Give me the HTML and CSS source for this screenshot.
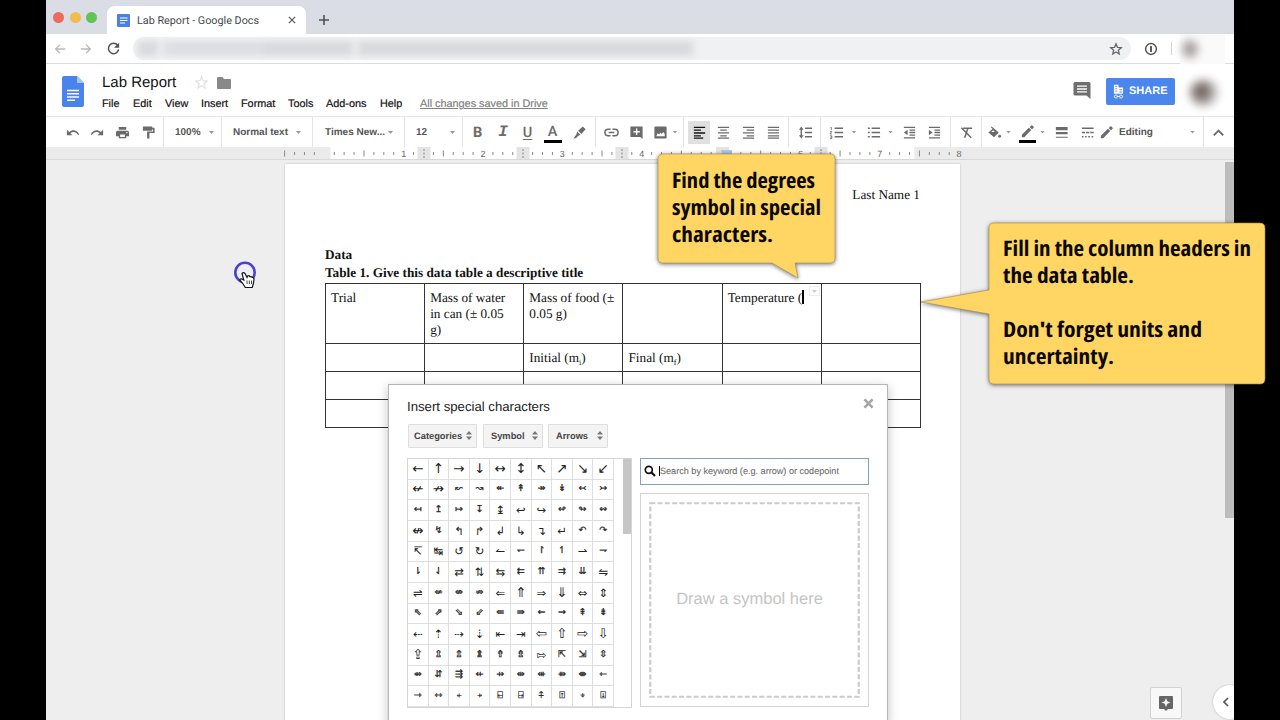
FILE: index.html
```html
<!DOCTYPE html>
<html lang="en">
<head>
<meta charset="utf-8">
<title>Lab Report - Google Docs</title>
<link rel="stylesheet" href="styles.css">
</head>
<body>
<svg class="defs" aria-hidden="true">
  <symbol id="undo" viewBox="0 0 16 16"><path d="M2 5v6h6L5.700 8.700C8.500 6.500 12 7.200 14 10.700l1.200-.6C12.900 5.400 8 4.400 4.500 7.500z"/></symbol>
  <symbol id="print" viewBox="0 0 16 16"><path d="M4 2h8v3H4zM3 6h10a2 2 0 0 1 2 2v4h-3v2H4v-2H1V8a2 2 0 0 1 2-2zm2.500 4v2.700h5V10zM12 7.500v1.200h1.300V7.500z" fill-rule="evenodd"/></symbol>
  <symbol id="paint" viewBox="0 0 16 16"><path d="M2 1.500h10v1.500h2.500V8.500H9v6H6.500V6.900h6.400V4.600H12V6H2z"/></symbol>
  <symbol id="hl" viewBox="0 0 16 16"><path d="M11.500 1.500l3 3L10 9.500 6.500 6zM5.500 7l3.500 3.500-2.500 1.300L4 14H1.500l3-3.500z"/></symbol>
  <symbol id="link" viewBox="0 0 16 16"><path d="M7 4.500H4.500a3.500 3.500 0 0 0 0 7H7M9 4.500h2.500a3.500 3.500 0 0 1 0 7H9M5 8h6" fill="none" stroke="currentColor" stroke-width="1.600"/></symbol>
  <symbol id="addc" viewBox="0 0 16 16"><path d="M1.500 1.500h13V15L12 12.700H1.500zM7.400 3.700v2.700H4.700v1.500h2.700v2.700h1.500V7.900h2.700V6.400H8.900V3.700z" fill-rule="evenodd"/></symbol>
  <symbol id="img" viewBox="0 0 16 16"><path d="M2.500 1.500h11q1 0 1 1v11q0 1-1 1h-11q-1 0-1-1v-11q0-1 1-1zM3.500 12h9V9.500L11 7.500 9.500 9.500 8 8 6.500 10 5 8.500z" fill-rule="evenodd"/></symbol>
  <symbol id="al" viewBox="0 0 16 16"><path d="M2 2.500h12M2 5.500h7.500M2 8.500h12M2 11.500h7.500M2 14h10" stroke="currentColor" stroke-width="1.400"/></symbol>
  <symbol id="ac" viewBox="0 0 16 16"><path d="M2 2.500h12M4.500 5.500h7M2 8.500h12M4.500 11.500h7M2 14h12" stroke="currentColor" stroke-width="1.300"/></symbol>
  <symbol id="ar" viewBox="0 0 16 16"><path d="M2 2.500h12M6 5.500h8M2 8.500h12M6 11.500h8M2 14h12" stroke="currentColor" stroke-width="1.300"/></symbol>
  <symbol id="aj" viewBox="0 0 16 16"><path d="M2 2.500h12M2 5.500h12M2 8.500h12M2 11.500h12M2 14h12" stroke="currentColor" stroke-width="1.300"/></symbol>
  <symbol id="ls" viewBox="0 0 16 16"><path d="M7.500 3.500H15M7.500 8H15M7.500 12.500H15M3.500 4v8" stroke="currentColor" stroke-width="1.500"/><path d="M3.500 1.500L6 5H1zM3.500 14.500L6 11H1z"/></symbol>
  <symbol id="nl" viewBox="0 0 16 16"><path d="M6 3.500h9M6 8h9M6 12.500h9" stroke="currentColor" stroke-width="1.500"/><path d="M1.500 2.500h1v3M1 7h2L1 9.500h2M1 11.500h2v3H1M1.500 13H3" stroke="currentColor" stroke-width=".9" fill="none"/></symbol>
  <symbol id="bl" viewBox="0 0 16 16"><path d="M6 3.500h9M6 8h9M6 12.500h9M2 3.500h2M2 8h2M2 12.500h2" stroke="currentColor" stroke-width="1.700"/></symbol>
  <symbol id="od" viewBox="0 0 16 16"><path d="M2 2.500h12M8 5.500h6M8 8h6M8 10.700h6M2 13.700h12" stroke="currentColor" stroke-width="1.400"/><path d="M2 8l4-3v6z"/></symbol>
  <symbol id="id" viewBox="0 0 16 16"><path d="M2 2.500h12M8 5.500h6M8 8h6M8 10.700h6M2 13.700h12" stroke="currentColor" stroke-width="1.400"/><path d="M6 8L2 5v6z"/></symbol>
  <symbol id="cf" viewBox="0 0 16 16"><path d="M4.500 3.500H14M9.500 3.500L6 13.500M2.500 3L13 13.500" stroke="currentColor" stroke-width="1.600" fill="none"/></symbol>
  <symbol id="fill" viewBox="0 0 16 16"><path d="M5 1.500l7.500 6.500L7.500 13 1.500 8 6 4 4 2.500zM6.500 5.500L4.500 7.500h4z" fill-rule="evenodd"/><circle cx="13.500" cy="12" r="1.500"/></symbol>
  <symbol id="pencil" viewBox="0 0 16 16"><path d="M2 11.500V14h2.500L12 6.500 9.500 4zM10.300 3.200L12 1.500q.6-.5 1.200 0L14.500 3q.5.500 0 1.100L12.800 5.700z"/></symbol>
  <symbol id="lw" viewBox="0 0 16 16"><path d="M2 2h12.500v3.500H2zM2 7.500h12.500v2.300H2zM2 12.500h12.500v1.200H2z"/></symbol>
  <symbol id="ld" viewBox="0 0 16 16"><path d="M2 3.500h12.500M2 8h3.400M6.500 8h3.500M11 8h3.500M2 12.500h1.700M5.400 12.500h1.700M8.800 12.500h1.700M12.400 12.500h1.700" stroke="currentColor" stroke-width="1.700"/></symbol>
  <symbol id="up" viewBox="0 0 16 16"><path d="M3 11l5-5 5 5" stroke="currentColor" stroke-width="2" fill="none"/></symbol>
  <symbol id="star" viewBox="0 0 16 16"><path d="M8 2l1.700 4.100 4.400.4-3.400 2.900 1 4.300L8 11.400l-3.700 2.300 1-4.300-3.400-2.900 4.400-.4z" fill="none" stroke="currentColor" stroke-width="1.400"/></symbol>
  <symbol id="back" viewBox="0 0 16 16"><path d="M14 8H3M8 3L3 8l5 5" fill="none" stroke="currentColor" stroke-width="1.500"/></symbol>
  <symbol id="x" viewBox="0 0 16 16"><path d="M3 3l10 10M13 3L3 13" fill="none" stroke="currentColor"/></symbol>
</svg>

<main class="screen">
  <div class="tabs">
    <div class="lights"><i class="red"></i><i class="yellow"></i><i class="green"></i></div>
    <div class="tab">
      <svg class="tabicon" viewBox="0 0 13 13"><rect width="13" height="13" rx="1" fill="#4a80ea"/><path d="M3 4h7.500M3 6.500h7.500M3 9h5" stroke="#fff" stroke-width="1.200"/></svg>
      <span class="tabname">Lab Report - Google Docs</span>
      <svg class="tabclose"><use href="#x"/></svg>
    </div>
    <svg class="plus" viewBox="0 0 12 12"><path d="M6 1v10M1 6h10" stroke="#4d5055" stroke-width="1.600"/></svg>
  </div>

  <div class="address">
    <svg class="ic nav"><use href="#back"/></svg>
    <svg class="ic nav fwd"><use href="#back"/></svg>
    <svg class="ic reload" viewBox="0 0 16 16"><path d="M12.500 4.700A5.500 5.500 0 1 0 13.500 9" fill="none" stroke="#505357" stroke-width="1.600"/><path d="M14 1.800v5.400H8.600z" fill="#505357"/></svg>
    <div class="omni"><div class="smear"><i></i><i></i><i></i><i></i></div><svg class="ic"><use href="#star"/></svg></div>
    <svg class="ic onep" viewBox="0 0 16 16"><circle cx="8" cy="8" r="6.200" fill="none" stroke="#555" stroke-width="1.700"/><path d="M8 4.500v7" stroke="#555" stroke-width="2.200"/></svg>
    <div class="vline"></div>
    <div class="haze"><i></i></div>
  </div>

  <header class="header">
    <svg class="doclogo" viewBox="0 0 22 31"><path d="M2 0h13l7 7v22q0 2-2 2H2q-2 0-2-2V2q0-2 2-2z" fill="#4a83ec"/><path d="M15 0l7 7h-7z" fill="#a5c3f7"/><path d="M5 14.500h12M5 17.700h12M5 21h12M5 24.200h8" stroke="#fff" stroke-width="1.400"/></svg>
    <div class="titles">
      <div class="titlerow"><span class="title">Lab Report</span><svg class="ic pale"><use href="#star"/></svg><svg class="folder" viewBox="0 0 14 12"><path d="M1 0h4.500L7 2h6q1 0 1 1v8q0 1-1 1H1q-1 0-1-1V1q0-1 1-1z" fill="#888"/></svg></div>
      <nav class="menu"><span>File</span><span>Edit</span><span>View</span><span>Insert</span><span>Format</span><span>Tools</span><span>Add-ons</span><span>Help</span><a>All changes saved in Drive</a></nav>
    </div>
    <svg class="comments" viewBox="0 0 18 17"><path d="M2 0h14q1.500 0 1.500 1.500V17l-4-3.500H2Q.5 13.500.5 12V1.500Q.5 0 2 0z" fill="#6e6e6e"/><path d="M4 4.200h10M4 7h10M4 9.800h10" stroke="#fff" stroke-width="1.300"/></svg>
    <div class="share"><svg viewBox="0 0 12 15"><path d="M1 0h5v3h5v7H1z" fill="#fff"/><path d="M2.500 2h2M2.500 4.500h2M2.500 7h2M7 5.500h3M7 8h3" stroke="#4a83ec"/><path d="M5 11.500H3a1.500 1.500 0 0 0 0 3h2M7 11.500h2a1.500 1.500 0 0 1 0 3H7M4 13h4" fill="none" stroke="#fff"/></svg>SHARE</div>
    <div class="avatar"></div>
  </header>

  <div class="toolbar">
    <div class="grp g1"><svg class="ic"><use href="#undo"/></svg><svg class="ic flip"><use href="#undo"/></svg><svg class="ic"><use href="#print"/></svg><svg class="ic"><use href="#paint"/></svg></div>
    <div class="grp g2 drop"><b>100%</b><i></i></div>
    <div class="grp g3 drop"><b>Normal text</b><i></i></div>
    <div class="grp g4 drop"><b>Times New...</b><i></i></div>
    <div class="grp g5 drop"><b>12</b><i></i></div>
    <div class="grp g6"><b class="ltr">B</b><b class="ltr it">I</b><b class="ltr un">U</b><b class="ltr ink">A</b><svg class="ic"><use href="#hl"/></svg></div>
    <div class="grp g7"><svg class="ic"><use href="#link"/></svg><svg class="ic"><use href="#addc"/></svg><svg class="ic"><use href="#img"/></svg><i></i></div>
    <div class="grp g8"><span class="on"><svg class="ic"><use href="#al"/></svg></span><svg class="ic"><use href="#ac"/></svg><svg class="ic"><use href="#ar"/></svg><svg class="ic"><use href="#aj"/></svg></div>
    <div class="grp g9"><svg class="ic"><use href="#ls"/></svg></div>
    <div class="grp g10"><svg class="ic"><use href="#nl"/></svg><i></i><svg class="ic"><use href="#bl"/></svg><i></i><svg class="ic"><use href="#od"/></svg><svg class="ic"><use href="#id"/></svg></div>
    <div class="grp g11"><svg class="ic"><use href="#cf"/></svg></div>
    <div class="grp g12"><svg class="ic"><use href="#fill"/></svg><i></i><span class="pen"><svg class="ic"><use href="#pencil"/></svg></span><i></i><svg class="ic wt"><use href="#lw"/></svg><svg class="ic ds"><use href="#ld"/></svg><svg class="ic"><use href="#pencil"/></svg><b class="edit">Editing</b><i class="last"></i></div>
    <div class="g13"><svg class="ic"><use href="#up"/></svg></div>
  </div>

  <svg class="ruler" id="ruler" viewBox="46 147 1188 12"></svg>

  <section class="canvas">
    <article class="paper">
      <p class="lastname">Last Name 1</p>
      <p class="bold">Data</p>
      <p class="bold">Table 1. Give this data table a descriptive title</p>
      <div class="table">
        <div>Trial</div><div>Mass of water in can (± 0.05 g)</div><div>Mass of food (± 0.05 g)</div><div></div><div class="temp">Temperature (<span class="caret"></span></div><div></div>
        <div></div><div></div><div>Initial (m<sub>i</sub>)</div><div>Final (m<sub>f</sub>)</div><div></div><div></div>
        <div></div><div></div><div></div><div></div><div></div><div></div>
        <div></div><div></div><div></div><div></div><div></div><div></div>
      </div>
    </article>
    <div class="scroll"></div>
  </section>
</main>

<div class="cellmenu"></div>
<div class="explore"><svg viewBox="0 0 16 16"><path d="M2 1h12q1 0 1 1v11q0 1-1 1h-4l-2 2-2-2H2q-1 0-1-1V2q0-1 1-1zM8 3L6.700 6.200 3.500 7.500l3.200 1.300L8 12l1.300-3.200 3.200-1.300-3.200-1.300z" fill="#666" fill-rule="evenodd"/></svg></div>
<div class="side"><span><svg viewBox="0 0 10 12"><path d="M7 2L3 6l4 4" fill="none" stroke="#555" stroke-width="1.700"/></svg></span></div>

<section class="dialog">
  <div class="dhead"><h2>Insert special characters</h2><svg><use href="#x"/></svg></div>
  <div class="picks"><div class="p1">Categories<i></i></div><div class="p2">Symbol<i></i></div><div class="p3">Arrows<i></i></div></div>
  <div class="dbody">
    <div class="chars"><div class="cells" id="cells"></div><div class="thumb"></div></div>
    <div class="right">
      <div class="search"><svg viewBox="0 0 12 12"><circle cx="4.800" cy="4.800" r="3.500" fill="none" stroke="#111" stroke-width="1.700"/><path d="M7.300 7.300L11 11" stroke="#111" stroke-width="2.200"/></svg><span class="scaret"></span><span>Search by keyword (e.g. arrow) or codepoint</span></div>
      <div class="draw"><svg viewBox="0 0 211 196"><rect x="1.250" y="1.250" width="208.500" height="193.500" fill="none" stroke="#cbcbcb" stroke-width="2.200" stroke-dasharray="5 2.300"/></svg><span>Draw a symbol here</span></div>
    </div>
  </div>
</section>

<svg class="overlay" viewBox="0 0 1280 720">
  <g class="bubble">
    <path d="M663 154h167q5 0 5 5v99q0 5-5 5h-35l3 15-26-15H663q-5 0-5-5v-99q0-5 5-5z"/>
    <path d="M994 223h266q5 0 5 5v151q0 5-5 5H994q-5 0-5-5v-65l-68-12 68-12v-62q0-5 5-5z"/>
  </g>
  <g class="hand">
    <text x="672" y="188" textLength="143" lengthAdjust="spacingAndGlyphs">Find the degrees</text>
    <text x="672" y="215" textLength="149" lengthAdjust="spacingAndGlyphs">symbol in special</text>
    <text x="672" y="242" textLength="101" lengthAdjust="spacingAndGlyphs">characters.</text>
    <text x="1003" y="256" textLength="248" lengthAdjust="spacingAndGlyphs">Fill in the column headers in</text>
    <text x="1003" y="283" textLength="131" lengthAdjust="spacingAndGlyphs">the data table.</text>
    <text x="1003" y="337" textLength="199" lengthAdjust="spacingAndGlyphs">Don't forget units and</text>
    <text x="1003" y="364" textLength="111" lengthAdjust="spacingAndGlyphs">uncertainty.</text>
  </g>
  <circle cx="245" cy="272.500" r="9.700" fill="#eeeef6" stroke="#4d40d2" stroke-width="2.600"/>
  <path d="M242 273.500q1.500-1.500 3 0l2 4 .5-1.500q1.500-.8 2.500.8 1.500-.7 2.300.7 1.500-.3 1.700 1.500l-.5 4-1.200 4.500h-7l-2.500-4-3-3.500q.3-1.500 2-1l2 1z" fill="#fff" stroke="#111" stroke-width="1.200"/>
  <path d="M247 280.500v3.500M249.300 280.500v3.500M251.500 280.500v3.500" stroke="#111" stroke-width=".8"/>
</svg>
<script src="app.js"></script>
</body>
</html>
```
FILE: styles.css
```css
* { box-sizing: border-box; }
body { margin: 0; width: 1280px; height: 720px; background: #000; overflow: hidden; position: relative; font-family: "Liberation Sans", Arial, sans-serif; color: #111; text-rendering: geometricPrecision; }
.defs { position: absolute; width: 0; height: 0; }
i { font-style: normal; display: block; }
p, h2 { margin: 0; }
.ic { width: 15px; height: 15px; flex: none; fill: currentColor; }
.screen { margin-left: 46px; width: 1188px; height: 720px; background: #fff; display: flex; flex-direction: column; overflow: hidden; }

.tabs { height: 34px; flex: none; background: linear-gradient(#dadde6 70%, #dadddf); display: flex; align-items: center; }
.lights { display: flex; gap: 5.500px; padding-left: 7px; width: 61px; }
.lights i { width: 11px; height: 11px; border-radius: 50%; }
.red { background: #ec6a5e; } .yellow { background: #f0bc4b; } .green { background: #5fc454; }
.tab { width: 199px; height: 28px; align-self: flex-end; background: #fff; border-radius: 8px 8px 0 0; display: flex; align-items: center; padding-left: 10px; }
.tabicon { width: 13px; height: 13px; margin-right: 7px; }
.tabname { font: 10.800px Roboto, sans-serif; color: #44474c; width: 149px; white-space: nowrap; }
.tabclose { width: 10px; height: 10px; margin-left: 1px; color: #5d6065; stroke-width: 2.200; }
.plus { width: 12px; height: 12px; margin-left: 12px; margin-top: 6px; }

.address { height: 30px; flex: none; display: flex; align-items: center; border-bottom: 1px solid #dcdde0; padding-left: 7px; }
.nav { color: #b8b9bb; margin-right: 12px; width: 14px; height: 14px; }
.fwd { transform: scaleX(-1); margin-right: 13px; }
.reload { width: 15px; height: 15px; margin-right: 12px; }
.omni { width: 998px; height: 23px; border-radius: 12px; background: #f0f1f3; display: flex; align-items: center; justify-content: space-between; padding-right: 8px; color: #606267; }
.omni .ic { width: 14px; height: 14px; }
.smear { display: flex; height: 15px; padding-left: 5px; width: 560px; filter: blur(3px); }
.smear i { background: #d9dadd; width: 200px; }
.smear i:nth-child(1) { width: 20px; } .smear i:nth-child(2) { width: 100px; margin-left: 5px; background: #dedfe2; }
.smear i:nth-child(3) { width: 90px; } .smear i:nth-child(4) { flex: 1; margin-left: 5px; }
.onep { width: 14px; height: 14px; margin-left: 13px; }
.vline { width: 1px; height: 13px; background: #d2d2d2; margin: 0 8px 0 13px; }
.haze { width: 45px; height: 30px; background: #fafafa; padding: 6px 0 0 2px; }
.haze i { width: 16px; height: 18px; border-radius: 50%; background: #a8a3a2; filter: blur(4px); }

.header { height: 53px; flex: none; display: flex; align-items: flex-start; padding: 12px 0 0 16px; border-bottom: 1px solid #e6e6e6; }
.doclogo { width: 22px; height: 31px; margin-right: 18px; }
.titles { width: 971px; margin-top: -3px; }
.titlerow { display: flex; height: 19px; align-items: center; }
.title { font-size: 15px; width: 92px; }
.pale { color: #e3e3e3; }
.folder { width: 14px; height: 12px; margin-left: 8px; }
.menu { display: grid; grid-template-columns: 31px 32px 36px 40px 47px 38px 54px 40px auto; font-size: 10.850px; line-height: 14px; margin-top: 5px; white-space: nowrap; -webkit-text-stroke: .2px; }
.menu a { color: #828282; text-decoration: underline; }
.comments { width: 18px; height: 17px; margin: 6px 15px 0 0; }
.share { width: 69px; height: 27px; margin-top: 1.500px; background: #4a86ec; border-radius: 2px; color: #fff; font: bold 11px "Liberation Sans", sans-serif; display: flex; align-items: center; gap: 5px; padding-left: 7px; }
.share svg { width: 11px; height: 15px; }
.avatar { width: 30px; height: 28px; margin: 3px 0 0 14px; border-radius: 50%; background: radial-gradient(circle at 42% 45%, #6e605b 0 16%, #a79f9c 42%, #dcd9d8 70%); filter: blur(4px); }

.toolbar { height: 30px; flex: none; display: flex; color: #6b6b6b; font-size: 10px; }
.toolbar > div { display: flex; align-items: center; flex: none; }
.grp { border-right: 1px solid #e4e4e4; }
.toolbar b { color: #555; white-space: nowrap; }
.toolbar i { width: 5px; height: 3px; flex: none; background: #999; clip-path: polygon(0 0, 100% 0, 50% 100%); }
.drop { justify-content: space-between; padding: 1px 7px 0 11px; }
.g1 { width: 118px; padding-left: 19px; gap: 10.200px; }
.g1 .flip { transform: scaleX(-1); }
.g2 { width: 58px; } .g3 { width: 91px; } .g3.grp { padding-right: 11px; } .g4 { width: 92px; } .g4.grp { padding-right: 11px; padding-left: 12px; } .g5 { width: 58px; }
.g6 { width: 133px; padding-left: 2px; }
.toolbar .ltr { width: 25.300px; text-align: center; font: bold 14.500px Roboto, "Liberation Sans", sans-serif; color: #6b6b6b; }
.toolbar .it { font-style: italic; font-family: "Liberation Mono", monospace; font-size: 16px; }
.toolbar .un { text-decoration: underline; font-weight: 500; text-underline-offset: 2px; width: 24px; }
.toolbar .ink { font-weight: 500; border-bottom: 3px solid #000; width: 18px; margin: 2px 10px 0 4px; line-height: 16px; }
.g7 { width: 88px; padding-left: 8px; gap: 9.500px; }
.g7 i { margin-left: -5px; }
.g8 { width: 105px; padding-left: 4px; gap: 10px; }
.on { width: 22px; height: 23px; background: #e0e0e0; color: #111; display: grid; place-items: center; margin-right: -4px; }
.g9 { width: 32px; padding-left: 9px; }
.g10 { width: 130px; padding-left: 8px; }
.g10 i { margin: 0 9px 0 7.500px; }
.g10 .ic:last-child { margin-left: 9.500px; }
.g11 { width: 31px; padding-left: 8px; }
.g12 { width: 222px; padding-left: 5px; }
.g12 i { margin: 0 8px 0 4px; }
.pen { width: 17px; border-bottom: 3px solid #000; display: grid; justify-items: center; padding-bottom: 1px; margin-top: 2px; }
.wt { margin: 0 11px 0 1px; }
.ds { margin-right: 4px; }
.edit { margin-left: 5px; }
.toolbar .last { margin: 0 8px 0 auto; }
.g13 { width: 30px; padding-left: 7px; }

.ruler { width: 1188px; height: 13px; flex: none; background: #ebebeb; border-bottom: 1px solid #d9d9d9; }
.ruler text { font: 9px "Liberation Sans", sans-serif; fill: #666; text-anchor: middle; }

.canvas { flex: 1; background: #eee; display: flex; justify-content: space-between; padding-left: 239px; }
.paper { width: 675px; height: 557px; margin-top: 4px; background: #fff; box-shadow: 0 0 2px #bbb; padding: 22px 0 0 40px; font: 13.250px/18px "Liberation Serif", "Times New Roman", serif; color: #111; }
.lastname { text-align: right; margin: 0 40px 42px 0; }
.bold { font-weight: 700; }
.table { margin-top: 1px; width: 596px; display: grid; grid-template-columns: repeat(6, 1fr); grid-template-rows: 60px 28px 28px 28px; border-left: 1px solid #333; border-top: 1px solid #333; line-height: 16px; }
.table div { border-right: 1px solid #333; border-bottom: 1px solid #333; padding: 6px 6px 0 5px; }
.table .temp { white-space: nowrap; }
.table sub { font-size: 8px; line-height: 0; vertical-align: -3px; }
.caret { display: inline-block; width: 1.500px; height: 14px; background: #000; vertical-align: -2px; }
.scroll { width: 9px; height: 356px; margin-top: 2px; background: #bdbdbd; }
.cellmenu { position: absolute; left: 809px; top: 286px; width: 11px; height: 10px; border: 1px solid #eee; background: #fff; }
.cellmenu::after { content: ""; display: block; width: 5px; height: 3px; margin: 3px 2px; background: #ccc; clip-path: polygon(0 0, 100% 0, 50% 100%); }
.explore { position: absolute; left: 1150px; top: 687px; width: 32px; height: 32px; background: #f8f8f8; border: 1px solid #d2d2d2; border-radius: 2px; display: grid; place-items: center; }
.explore svg { width: 16px; height: 16px; }
.side { position: absolute; left: 1210px; top: 684px; width: 24px; height: 36px; overflow: hidden; }
.side span { display: block; width: 34px; height: 34px; border-radius: 50%; background: #fff; margin: 1px 3px; padding: 11px 0 0 8px; box-shadow: 0 0 2px #aaa; }
.side svg { width: 10px; height: 12px; display: block; }

.dialog { position: absolute; left: 388px; top: 384px; width: 500px; height: 340px; background: #fff; border: 1px solid #b5b5b5; box-shadow: 0 3px 10px rgba(0,0,0,.25); padding: 12px 18px 0; }
.dhead { display: flex; justify-content: space-between; }
.dhead h2 { font-weight: 400; font-size: 13.200px; line-height: 20px; color: #222; }
.dhead svg { width: 13px; height: 13px; color: #a5a5a5; margin-right: -6px; stroke-width: 3.200; }
.picks { display: flex; margin: 7px 0 10px 1px; height: 24px; font-size: 9.300px; font-weight: 700; color: #444; }
.picks div { border: 1px solid #dedede; background: #f4f4f4; display: flex; align-items: center; justify-content: space-between; padding: 0 4px 1px 5px; border-radius: 1px; }
.p1 { width: 69px; } .p2 { width: 60px; margin: 0 5px 0 6px; } .p3 { width: 60px; }
.picks .p2, .picks .p3 { padding-left: 7px; }
.picks i { width: 6px; height: 9px; background: #777; clip-path: polygon(50% 0, 100% 38%, 0 38%, 0 62%, 100% 62%, 50% 100%, 0 62%, 0 38%); }
.dbody { display: flex; gap: 8px; }
.chars { width: 225px; height: 250px; border: 1px solid #d6d6d6; display: flex; justify-content: space-between; }
.cells { width: 206px; height: 248px; display: grid; grid-template-columns: repeat(10, 1fr); grid-template-rows: repeat(12, 1fr); }
.cells span { border-right: 1px solid #dedede; border-bottom: 1px solid #dedede; display: grid; place-items: center; font-family: "DejaVu Sans", sans-serif; line-height: 12px; color: #222; overflow: hidden; min-width: 0; min-height: 0; }
.cells .l { font-size: 13.500px; } .cells .m { font-size: 11.500px; } .cells .s { font-size: 9.500px; }
.cells .s { -webkit-text-stroke: .25px; }
.thumb { width: 8px; height: 75px; background: #c6c6c6; }
.right { width: 229px; }
.search { height: 27px; border: 1px solid #7da2bf; display: flex; align-items: center; padding: 0 0 2px 3px; font-size: 9.100px; color: #6e6e6e; white-space: nowrap; -webkit-text-stroke: .1px; }
.search svg { width: 12px; height: 12px; }
.scaret { width: 1px; height: 10px; background: #000; margin-left: 3px; flex: none; }
.draw { height: 214px; margin-top: 8px; border: 1px solid #d4d4d4; display: grid; place-items: center; color: #c4c4c4; font-size: 16.500px; white-space: nowrap; }
.draw > * { grid-area: 1 / 1; }
.draw span { padding: 0 10px 2px 0; }
.draw svg { width: 211px; height: 196px; }

.overlay { position: absolute; left: 0; top: 0; width: 1280px; height: 720px; }
.bubble { fill: #ffd563; stroke: #a28b51; stroke-width: .6; filter: drop-shadow(0 1px 2px rgba(0,0,0,.55)); }
.hand text { font: 700 21.500px "Open Sans", "DejaVu Sans", sans-serif; font-stretch: 75%; fill: #0b0800; }
```
FILE: app.js
```js
const rows = [
  ['←↑→↓↔↕↖↗↘↙', 'llllllllll'],
  ['↚↛↜↝↞↟↠↡↢↣', 'llssssssss'],
  ['↤↥↦↧↨↩↪↫↬↭', 'ssssmmmsss'],
  ['↮↯↰↱↲↳↴↵↶↷', 'lsmmmmmmss'],
  ['↸↹↺↻↼↽↾↿⇀⇁', 'mmmmmsssms'],
  ['⇂⇃⇄⇅⇆⇇⇈⇉⇊⇋', 'ssmmmssssm'],
  ['⇌⇍⇎⇏⇐⇑⇒⇓⇔⇕', 'msssmlmlmm'],
  ['⇖⇗⇘⇙⇚⇛⇜⇝⇞⇟', 'ssssssssss'],
  ['⇠⇡⇢⇣⇤⇥⇦⇧⇨⇩', 'mmmmmmllll'],
  ['⇪⇫⇬⇭⇮⇯⇰⇱⇲⇳', 'lsssssmsss'],
  ['⇴⇵⇶⇷⇸⇹⇺⇻⇼⇽', 'ssssssssss'],
  ['⇾⇿⍅⍆⍇⍈⍏⍐⍖⍗', 'ssssssssss']
];
const cells = document.getElementById('cells');
rows.forEach(([glyphs, sizes]) => [...glyphs].forEach((g, i) => {
  const s = document.createElement('span');
  s.className = sizes[i];
  s.textContent = g;
  cells.append(s);
}));

// Ruler: eight ticks to the inch, numbered inches, column handles.
const zero = 324.3, inch = 79.35;
let out = '<rect x="330.500" y="147" width="584" height="12" fill="#fff"/>';
for (let k = -4; k <= 64; k++) {
  if (k === 0) continue;
  const x = zero + k * inch / 8;
  if (k > 0 && k % 8 === 0) out += `<text x="${x}" y="157">${k / 8}</text>`;
  else {
    const h = k % 4 === 0 ? 6 : 3;
    out += `<rect x="${x - .5}" y="${153.5 - h / 2}" width="1" height="${h}" fill="#888"/>`;
  }
}
for (const x of [424, 523, 622, 821]) {
  out += `<rect x="${x - 6.5}" y="147" width="13" height="12" fill="#e4e4e4"/><path d="M${x} 149v9" stroke="#888" stroke-dasharray="2 1.500"/>`;
}
out += '<rect x="716" y="147" width="13" height="12" fill="#e4e4e4"/><path d="M721 150h11v4l-5 4-5-4z" fill="#a9c7ec"/>';
document.getElementById('ruler').innerHTML = out;
```
